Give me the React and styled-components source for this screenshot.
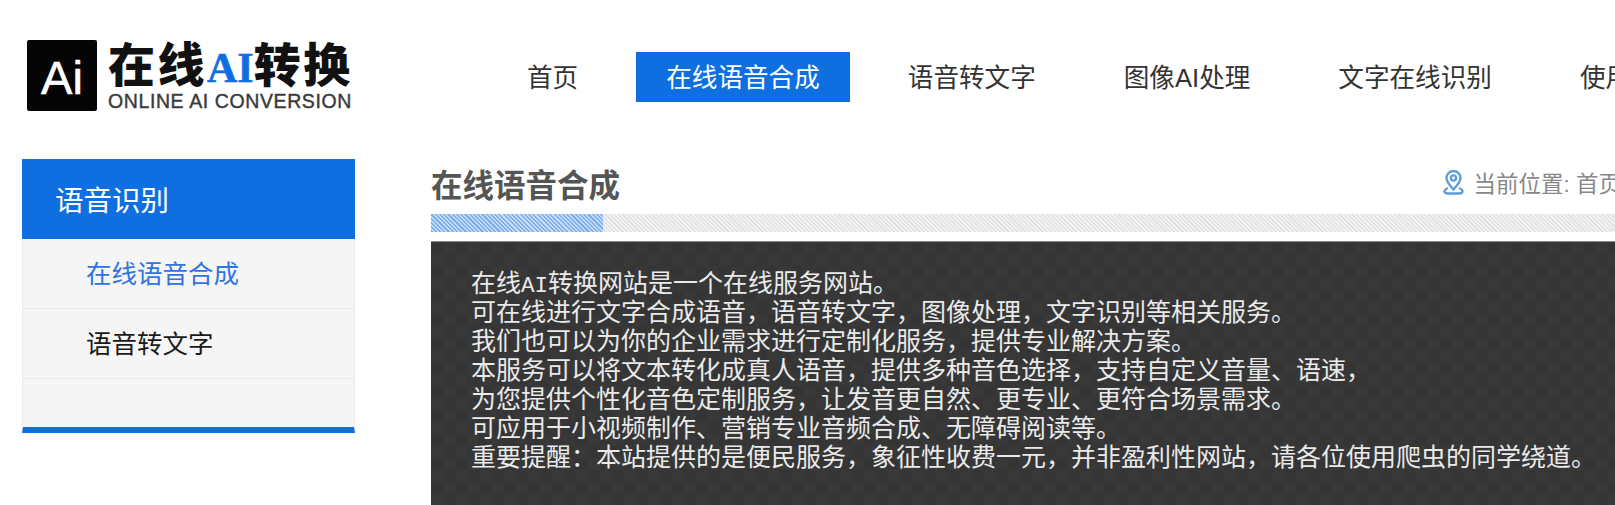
import React from "react"
import styled, { createGlobalStyle } from "styled-components"

const BLUE = "#0f6fe0"
const SANS = `"Liberation Sans", "Noto Sans CJK SC", sans-serif`

const GlobalStyle = createGlobalStyle`
  html, body {
    margin: 0;
    height: 505px;
    overflow: hidden;
    background: #fff;
    font-family: ${SANS};
  }
  * {
    box-sizing: border-box;
  }
`

const navItems = ["首页", "在线语音合成", "语音转文字", "图像AI处理", "文字在线识别", "使用说明"]

const introLines = [
  "可在线进行文字合成语音，语音转文字，图像处理，文字识别等相关服务。",
  "我们也可以为你的企业需求进行定制化服务，提供专业解决方案。",
  "本服务可以将文本转化成真人语音，提供多种音色选择，支持自定义音量、语速，",
  "为您提供个性化音色定制服务，让发音更自然、更专业、更符合场景需求。",
  "可应用于小视频制作、营销专业音频合成、无障碍阅读等。",
  "重要提醒：本站提供的是便民服务，象征性收费一元，并非盈利性网站，请各位使用爬虫的同学绕道。",
]

const PinIcon = () => (
  <svg width="21" height="26" viewBox="1 0 20 26" fill="none" stroke="#5f9fd6" strokeWidth="2.400">
    <path d="M11 20.500C7.500 16.500 4 13 4 9a7 7 0 0 1 14 0c0 4-3.500 7.500-7 11.500z" />
    <circle cx="11" cy="9" r="2.600" />
    <path d="M5.500 19C3.500 19.800 2 20.800 2 22.300c0 1.400 1.800 2.200 3.500 2.200h11c1.700 0 3.500-.8 3.500-2.200 0-1.500-1.500-2.500-3.500-3.300" />
  </svg>
)

const App = () => (
  <Page>
    <GlobalStyle />
    <Header>
      <Logo>
        <LogoMark>Ai</LogoMark>
        <LogoText>
          <LogoTitle>
            在线<b>AI</b>转换
          </LogoTitle>
          <LogoSub>ONLINE AI CONVERSION</LogoSub>
        </LogoText>
      </Logo>
      <Nav>
        {navItems.map((item) => (
          <NavItem key={item} $active={item === "在线语音合成"}>
            {item}
          </NavItem>
        ))}
      </Nav>
    </Header>
    <Main>
      <Sidebar>
        <SideHead>语音识别</SideHead>
        <SideItem $active>在线语音合成</SideItem>
        <SideItem>语音转文字</SideItem>
        <SideItem $blank />
      </Sidebar>
      <Content>
        <TitleRow>
          <Title>在线语音合成</Title>
          <Crumb>
            <PinIcon />
            <span>当前位置: 首页</span>
          </Crumb>
        </TitleRow>
        <Stripe>
          <StripeFill />
        </Stripe>
        <Intro>
          <IntroLine>
            在线<Latin>AI</Latin>转换网站是一个在线服务网站。
          </IntroLine>
          {introLines.map((line) => (
            <IntroLine key={line}>{line}</IntroLine>
          ))}
        </Intro>
      </Content>
    </Main>
  </Page>
)

export default App

const Page = styled.div`
  width: 1615px;
  height: 505px;
  overflow: hidden;
`

const Header = styled.header`
  display: flex;
  align-items: flex-start;
  height: 159px;
  padding: 40px 0 0 27px;
`

const Logo = styled.div`
  display: flex;
  flex: none;
  width: 327px;
  gap: 11px;
`

const LogoMark = styled.div`
  display: flex;
  align-items: center;
  justify-content: center;
  width: 70px;
  height: 71px;
  padding-top: 4px;
  background: #050505;
  border-radius: 2px;
  color: #fff;
  font-size: 47px;
  line-height: 1;
  -webkit-text-stroke: 0.600px #fff;
`

const LogoText = styled.div`
  display: flex;
  flex-direction: column;
`

const LogoTitle = styled.div`
  height: 52px;
  margin-top: -3px;
  font-family: "Noto Sans CJK SC", sans-serif;
  font-size: 47px;
  font-weight: 900;
  line-height: 50px;
  letter-spacing: 2.500px;
  color: #111;
  white-space: nowrap;

  b {
    font-family: "Liberation Serif", serif;
    font-size: 42px;
    letter-spacing: 0;
    color: ${BLUE};
    -webkit-text-stroke: 0.500px ${BLUE};
  }
`

const LogoSub = styled.div`
  margin-top: 2px;
  font-size: 19.500px;
  line-height: 20px;
  letter-spacing: 0.600px;
  color: #3a3a3a;
  white-space: nowrap;
  -webkit-text-stroke: 0.400px #3a3a3a;
`

const Nav = styled.nav`
  display: flex;
  flex: none;
  gap: 28px;
  margin: 12px 0 0 143px;
`

const NavItem = styled.a`
  height: 50px;
  padding: 0 30px;
  background: ${({ $active }) => ($active ? BLUE : "transparent")};
  color: ${({ $active }) => ($active ? "#fff" : "#333")};
  font-size: 25.600px;
  line-height: 53px;
  white-space: nowrap;
`

const Main = styled.main`
  display: flex;
  gap: 76px;
  padding-left: 22px;
`

const Sidebar = styled.aside`
  flex: none;
  width: 333px;
  height: 274px;
  background: #f5f5f5;
  border-left: 1px solid #eaeaea;
  border-right: 1px solid #eaeaea;
  border-bottom: 6px solid ${BLUE};
`

const SideHead = styled.div`
  height: 80px;
  margin: 0 -1px;
  padding: 2px 0 0 33px;
  background: ${BLUE};
  color: #fff;
  font-size: 28.500px;
  line-height: 80px;
`

const SideItem = styled.div`
  height: ${({ $blank }) => ($blank ? "48px" : "70px")};
  padding-left: 63px;
  border-bottom: ${({ $blank }) => ($blank ? "none" : "1px solid #e8e8e8")};
  color: ${({ $active }) => ($active ? "#2f74e0" : "#1a1a1a")};
  font-size: 25.500px;
  line-height: 71px;
`

const Content = styled.section`
  flex: none;
  width: 1190px;
`

const TitleRow = styled.div`
  display: flex;
  align-items: center;
  justify-content: space-between;
  height: 55px;
`

const Title = styled.h1`
  margin: 0 0 2px;
  color: #555;
  font-size: 31.500px;
  font-weight: 700;
  line-height: 52px;
`

const Crumb = styled.div`
  display: flex;
  align-items: center;
  gap: 9px;
  margin-bottom: 9px;
  color: #888;
  font-size: 22.500px;
  white-space: nowrap;
`

const Stripe = styled.div`
  height: 18px;
  background: repeating-linear-gradient(45deg, #e2e2e2 0 1.500px, #f3f3f3 1.500px 3px);
`

const StripeFill = styled.div`
  width: 172px;
  height: 100%;
  background: repeating-linear-gradient(45deg, #7fb0ec 0 1.500px, #c6dbf6 1.500px 3px);
`

const Intro = styled.div`
  height: 300px;
  margin-top: 9px;
  padding: 25px 0 0 40px;
  border-top: 1px solid #8a8a8a;
  background-color: #363636;
  background-image: repeating-conic-gradient(#383838 0 25%, #353535 0 50%);
  background-size: 24px 24px;
`

const IntroLine = styled.div`
  height: 29px;
  color: #eaeaea;
  font-family: "Noto Sans CJK SC", monospace;
  font-size: 25px;
  line-height: 29px;
  white-space: nowrap;
`

const Latin = styled.span`
  font-family: "Liberation Mono", monospace;
  font-size: 22.500px;
  line-height: 1;
`
